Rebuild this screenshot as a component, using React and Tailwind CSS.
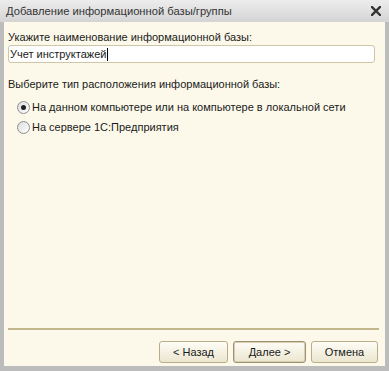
import React from 'react';

function Radio({ checked }) {
  return (
    <span className="relative w-[13px] h-[13px] rounded-full border border-[#8e8f8f] bg-gradient-to-br from-[#dcdcdc] to-[#ffffff] flex items-center justify-center shrink-0">
      {checked && <span className="w-[5px] h-[5px] rounded-full bg-[#1f1f1f]" />}
    </span>
  );
}

function Btn({ children, w, def }) {
  return (
    <button
      className={
        'h-[22px] rounded-[3px] border bg-gradient-to-b from-[#fefdf6] to-[#ebe6cf] text-[11px] text-[#1a1a1a] flex items-center justify-center ' +
        w +
        (def ? ' border-[#9c9170] shadow-[inset_0_0_0_1px_#d8cfae]' : ' border-[#b9ae88]')
      }
    >
      {children}
    </button>
  );
}

export default function App() {
  return (
    <div className="w-[389px] h-[371px] flex flex-col bg-[#bcbcbc] font-['Liberation_Sans',Arial,sans-serif] text-[#1a1a1a]">
      {/* заголовок окна */}
      <div className="h-[22px] flex items-center justify-between pl-[6px] pr-[8px] bg-gradient-to-b from-[#ededed] to-[#d4d4d4] text-[11.2px] text-[#333]">
        <span>Добавление информационной базы/группы</span>
        <svg width="10" height="10" viewBox="0 0 10 10">
          <path d="M1 1 L9 9 M9 1 L1 9" stroke="#333" strokeWidth="2.4" strokeLinecap="square" />
        </svg>
      </div>
      <div className="flex-1 flex pl-[4px] pr-[4px] pb-[5px]">
        <div className="flex-1 bg-[#fcf9ea] flex flex-col pl-[4px] pr-[6px] text-[11px]">
          <div className="mt-[8px] h-[15px] leading-[15px]">Укажите наименование информационной базы:</div>
          <div className="h-[18px] mr-[4px] rounded-[3px] border border-[#cfc6a8] bg-white flex items-center pl-[1px] text-[11px]">
            Учет инструктажей<span className="w-px h-[13px] bg-black ml-[1px]" />
          </div>
          <div className="mt-[14px] h-[15px] leading-[15px]">Выберите тип расположения информационной базы:</div>
          <div className="mt-[5px] ml-[9px] flex items-center gap-[2px] h-[20px]">
            <Radio checked />
            <span>На данном компьютере или на компьютере в локальной сети</span>
          </div>
          <div className="ml-[9px] flex items-center gap-[2px] h-[20px]">
            <Radio />
            <span>На сервере 1С:Предприятия</span>
          </div>
          <div className="flex-1" />
          <div className="h-[2px] bg-[#c2b68c]" />
          <div className="mt-[11px] mb-[3px] flex justify-end gap-[5px] pr-[1px]">
            <Btn w="w-[69px]">&lt; Назад</Btn>
            <Btn w="w-[73px]" def>Далее &gt;</Btn>
            <Btn w="w-[67px]">Отмена</Btn>
          </div>
        </div>
      </div>
    </div>
  );
}
